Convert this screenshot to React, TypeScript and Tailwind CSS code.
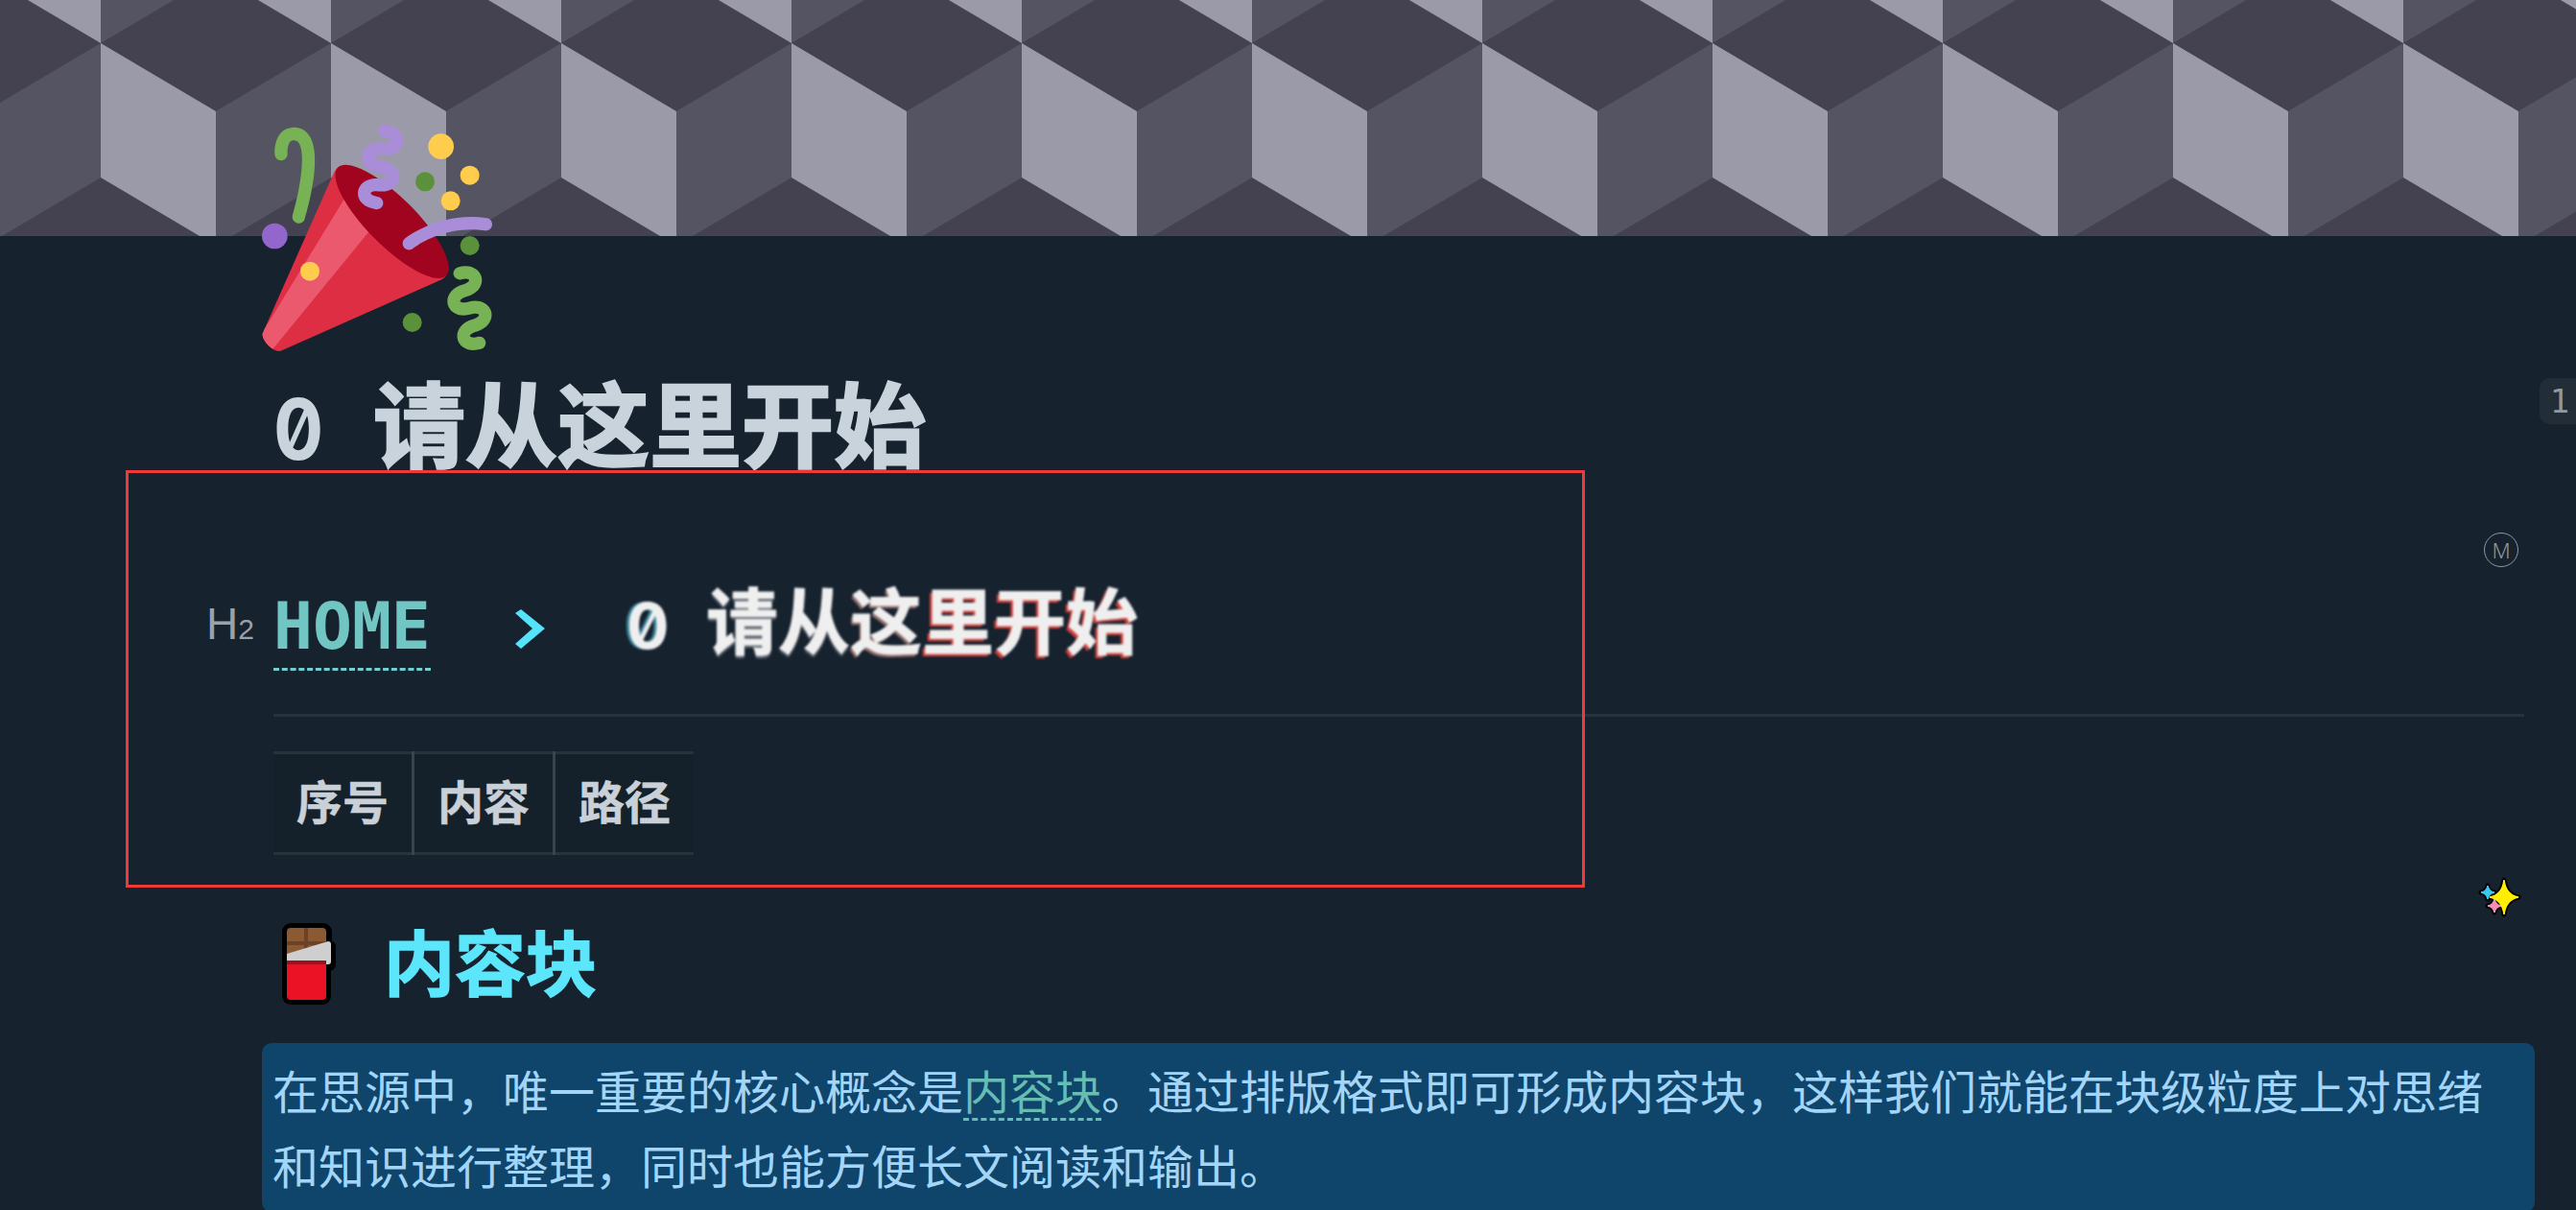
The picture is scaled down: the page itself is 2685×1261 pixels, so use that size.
const cjk = '"Noto Sans CJK SC", "Noto Sans", sans-serif';
const mono = '"DejaVu Sans Mono", "Noto Sans CJK SC", monospace';
const inter = '"Inter", "Noto Sans CJK SC", sans-serif';

function Banner() {
  return (
    <svg className="block w-full h-[246px]" aria-hidden="true">
      <defs>
        <pattern id="cubes" x="105" y="0" width="240" height="246" patternUnits="userSpaceOnUse">
          <rect width="240" height="246" fill="#444250" />
          <polygon points="0,45 120,116 120,256 0,185" fill="#9b9aa9" />
          <polygon points="120,116 240,45 240,185 120,256" fill="#555462" />
          <polygon points="120,-26 240,45 240,-95" fill="#9b9aa9" />
          <polygon points="0,45 120,-26 0,-95" fill="#555462" />
        </pattern>
      </defs>
      <rect width="100%" height="100%" fill="url(#cubes)" />
    </svg>
  );
}

function PartyPopper() {
  return (
    <svg viewBox="0 0 36 36" className="w-[240px] h-[240px]" aria-hidden="true">
      <path fill="#DD2E44" d="M11.626 7.488c-.112.112-.197.247-.268.395l-.008-.008L.134 33.141l.011.011c-.208.403.14 1.223.853 1.937.713.713 1.533 1.061 1.936.853l.01.01L28.21 24.735l-.008-.009c.147-.07.282-.155.395-.269 1.562-1.562-.971-6.627-5.656-11.313-4.687-4.686-9.752-7.218-11.315-5.656z" />
      <path fill="#EA596E" d="M13 12L.416 32.506l-.282.635.011.011c-.208.403.14 1.223.853 1.937.232.232.473.408.709.557L17 17l-4-5z" />
      <path fill="#A0041E" d="M23.012 13.066c4.67 4.672 7.263 9.652 5.789 11.124-1.473 1.474-6.453-1.118-11.126-5.788-4.671-4.672-7.263-9.654-5.79-11.127 1.474-1.473 6.454 1.119 11.127 5.791z" />
      <path fill="#AA8DD8" d="M18.59 13.609c-.199.161-.459.245-.734.215-.868-.094-1.598-.396-2.109-.873-.541-.505-.808-1.183-.735-1.862.128-1.192 1.324-2.286 3.363-2.066.793.085 1.147-.17 1.159-.292.014-.121-.277-.446-1.07-.532-.868-.094-1.598-.396-2.11-.873-.541-.505-.809-1.183-.735-1.862.13-1.192 1.325-2.286 3.362-2.065.578.062.883-.057 1.012-.134.103-.063.144-.123.148-.158.012-.121-.275-.446-1.07-.532-.549-.06-.947-.552-.886-1.102.059-.549.55-.946 1.101-.886 2.037.219 2.973 1.542 2.844 2.735-.13 1.194-1.325 2.286-3.364 2.067-.578-.063-.88.057-1.01.134-.103.062-.145.123-.149.157-.013.122.276.446 1.071.532 2.037.22 2.973 1.542 2.844 2.735-.129 1.192-1.324 2.286-3.362 2.065-.578-.062-.882.058-1.012.134-.104.064-.144.124-.148.158-.013.121.276.446 1.07.532.548.06.947.553.886 1.102-.028.274-.167.511-.366.671z" />
      <path fill="#77B255" d="M30.661 22.857c1.973-.557 3.334.323 3.658 1.478.324 1.154-.378 2.615-2.35 3.17-.77.216-1.001.584-.97.701.034.118.425.312 1.193.095 1.972-.555 3.333.325 3.657 1.479.326 1.155-.378 2.614-2.351 3.17-.769.216-1.001.585-.967.702.033.117.423.311 1.192.095.53-.149 1.084.16 1.233.691.148.532-.161 1.084-.693 1.234-1.971.555-3.333-.323-3.659-1.479-.324-1.154.379-2.613 2.353-3.169.77-.217 1.001-.584.967-.702-.032-.117-.422-.312-1.19-.096-1.974.556-3.334-.322-3.659-1.479-.325-1.154.378-2.613 2.351-3.17.768-.215.999-.585.967-.701-.034-.118-.423-.312-1.192-.096-.532.15-1.083-.16-1.233-.691-.149-.53.161-1.082.693-1.232z" />
      <path fill="#AA8DD8" d="M23.001 20.16c-.294 0-.584-.129-.782-.375-.345-.431-.274-1.06.156-1.406.218-.175 5.418-4.259 12.767-3.208.547.078.927.584.849 1.131-.078.546-.58.93-1.132.848-6.493-.922-11.187 2.754-11.233 2.791-.186.148-.406.219-.625.219z" />
      <path fill="#77B255" d="M5.754 16c-.095 0-.192-.014-.288-.042-.529-.159-.829-.716-.67-1.245 1.133-3.773 2.16-9.794.898-11.364-.141-.178-.354-.353-.842-.316-.938.072-.849 2.051-.848 2.071.042.551-.372 1.031-.922 1.072-.559.034-1.031-.372-1.072-.923-.103-1.379.326-4.035 2.692-4.214 1.056-.08 1.933.287 2.552 1.057 2.371 2.951-.036 11.506-.542 13.192-.13.433-.528.712-.958.712z" />
      <circle fill="#5C913B" cx="25.5" cy="9.5" r="1.5" />
      <circle fill="#9266CC" cx="2" cy="18" r="2" />
      <circle fill="#5C913B" cx="32.5" cy="19.5" r="1.5" />
      <circle fill="#5C913B" cx="23.5" cy="31.5" r="1.5" />
      <circle fill="#FFCC4D" cx="28" cy="4" r="2" />
      <circle fill="#FFCC4D" cx="32.5" cy="8.5" r="1.5" />
      <circle fill="#FFCC4D" cx="29.5" cy="12.5" r="1.5" />
      <circle fill="#FFCC4D" cx="7.5" cy="23.5" r="1.5" />
    </svg>
  );
}

function Chocolate() {
  return (
    <svg viewBox="0 0 56 85" className="w-[56px] h-[85px] shrink-0" aria-hidden="true">
      <path d="M9 0h34a9 9 0 0 1 9 9v10h-1v0a5 5 0 0 1 5 5v18a8 8 0 0 1-5 8v26a9 9 0 0 1-9 9H9a9 9 0 0 1-9-9V9a9 9 0 0 1 9-9z" fill="#000" />
      <path d="M5 9a4 4 0 0 1 4-4h33a4 4 0 0 1 4 4v40H5z" fill="#8c5a32" />
      <rect x="23" y="5" width="4" height="32" fill="#6a4226" />
      <rect x="5" y="19" width="41" height="4" fill="#6a4226" />
      <path d="M5 32l43-13a3 3 0 0 1 3 3v18a3 3 0 0 1-3 3H5z" fill="#cfcfcf" />
      <rect x="5" y="39" width="41" height="4" fill="#a50f1c" />
      <path d="M5 43h41v33a4 4 0 0 1-4 4H9a4 4 0 0 1-4-4z" fill="#ec1225" />
    </svg>
  );
}

function Sparkles() {
  const star = "M0 -1Q.13 -.13 1 0Q.13 .13 0 1Q-.13 .13 -1 0Q-.13 -.13 0 -1z";
  return (
    <svg viewBox="0 0 70 70" className="w-[70px] h-[70px]" aria-hidden="true">
      <path d={star} transform="translate(40 35) scale(15 18)" stroke="#000" strokeWidth="5" strokeLinejoin="round" vectorEffect="non-scaling-stroke" />
      <path d={star} transform="translate(23 30) scale(7)" stroke="#000" strokeWidth="5" strokeLinejoin="round" vectorEffect="non-scaling-stroke" />
      <path d={star} transform="translate(30 44) scale(7)" stroke="#000" strokeWidth="5" strokeLinejoin="round" vectorEffect="non-scaling-stroke" />
      <path d={star} transform="translate(23 30) scale(7)" fill="#38c8f0" stroke="#38c8f0" strokeWidth="1.5" vectorEffect="non-scaling-stroke" />
      <path d={star} transform="translate(30 44) scale(7)" fill="#f48fb8" stroke="#f48fb8" strokeWidth="1.5" vectorEffect="non-scaling-stroke" />
      <path d={star} transform="translate(40 35) scale(15 18)" fill="#ffee00" stroke="#ffee00" strokeWidth="1.5" vectorEffect="non-scaling-stroke" />
    </svg>
  );
}

export default function App() {
  return (
    <div className="relative h-[1261px] overflow-hidden bg-[#16222e]" style={{ fontFamily: cjk }}>
      <Banner />

      <div className="pl-[285px] pr-[54px]">
        {/* 文档图标 + 标题 */}
        <div className="-ml-3 -mt-[120px] relative">
          <PartyPopper />
        </div>
        <h1 className="flex items-baseline h-[120px] leading-[144px] text-[96px] font-bold text-[#c9d3dc] [-webkit-text-stroke:2.5px_#c9d3dc]">
          <span className="w-[104px] text-[88px] slashed-zero origin-left scale-x-[0.88] [-webkit-text-stroke:0]" style={{ fontFamily: inter }}>0</span>
          <span>请从这里开始</span>
        </h1>

        {/* H2 */}
        <h2 className="relative mt-[114px] flex items-baseline h-[97px] text-[75px] font-bold leading-[87px] text-[#efefef]">
          <div className="absolute -left-[70px] top-[27px] flex items-baseline text-[#9aa1a8] font-normal leading-none" style={{ fontFamily: '"Liberation Sans", sans-serif' }}>
            <span className="text-[46px]">H</span>
            <span className="text-[30px]">2</span>
          </div>
          <a className="h-[90px] w-[164px] border-b-[3px] border-dashed border-[#6fd0cf] text-[#71c6c4] text-[68px]" style={{ fontFamily: mono }}>HOME</a>
          <svg viewBox="0 0 31 41" className="ml-[88px] mt-[35px] w-[31px] h-[41px] self-start shrink-0" aria-hidden="true">
            <polygon points="0,4 6,0 31,20 6,41 0,36 18,20" fill="#55e3fb" />
          </svg>
          <span className="ml-[85px] w-[83px] text-[66px] slashed-zero [text-shadow:-3px_0_1px_#3f8aa0] blur-[1px]" style={{ fontFamily: inter }}>0</span>
          <span className="[-webkit-text-stroke:1px_#efefef] [text-shadow:0_3px_2px_#6f7682] blur-[1px]">请从</span>
          <span className="[-webkit-text-stroke:1px_#efefef] [text-shadow:-2px_3px_1px_#96706f] blur-[1px]">这</span>
          <span className="[-webkit-text-stroke:1px_#efefef] [text-shadow:-3px_3px_1px_#d8443f] blur-[1px]">里开始</span>
        </h2>

        <div className="mt-[47px] h-[3px] bg-[#28323d]" />

        <table className="mt-[36px] border-y-[3px] border-[#28323d] border-collapse bg-[#14212a]">
          <tbody>
            <tr className="text-[48px] font-bold text-[#c9d0d8] leading-[94px] [-webkit-text-stroke:0.5px_#c9d0d8]">
              <td className="px-[24px] pb-[8px]">序号</td>
              <td className="px-[24px] pb-[8px] border-l-[3px] border-[#39444f]">内容</td>
              <td className="px-[24px] pb-[8px] border-l-[3px] border-[#39444f]">路径</td>
            </tr>
          </tbody>
        </table>

        {/* H3 */}
        <div className="mt-[71px] flex items-start h-[85px] ml-[9px]">
          <Chocolate />
          <h3 className="ml-[50px] text-[74px] font-bold leading-[75px] text-[#5ce6fb] [-webkit-text-stroke:1.5px_#5ce6fb]">内容块</h3>
        </div>

        {/* 超级块正文 */}
        <div className="mt-[40px] -ml-3 -mr-[11px] rounded-[10px] bg-[#0f456b] pl-[11px] pr-3 pt-[9px] pb-[11px] text-[48px] leading-[78px] text-[#a3d5f8]">
          在思源中，唯一重要的核心概念是
          <span className="text-[#68bdb3] underline decoration-dashed decoration-[3px] underline-offset-[9px] [text-decoration-skip-ink:none]">内容块</span>
          。通过排版格式即可形成内容块，这样我们就能在块级粒度上对思绪和知识进行整理，同时也能方便长文阅读和输出。
        </div>
      </div>

      {/* 叠加层 */}
      <div className="absolute left-[131px] top-[490px] w-[1521px] h-[435px] border-[3px] border-[#f03a3a]" />
      <div className="absolute right-0 top-[394px] h-[48px] w-[38px] pl-1 rounded-l-[10px] bg-[#222d38] flex items-center justify-center text-[34px] text-[#8f99a3]" style={{ fontFamily: mono }}>1</div>
      <div className="absolute left-[2589px] top-[555px] w-[36px] h-[36px] rounded-full border border-[#8f99a3] flex items-center justify-center text-[22px] font-light text-[#8f99a3]" style={{ fontFamily: '"Noto Sans", sans-serif' }}>M</div>
      <div className="absolute left-[2570px] top-[900px]">
        <Sparkles />
      </div>
    </div>
  );
}
